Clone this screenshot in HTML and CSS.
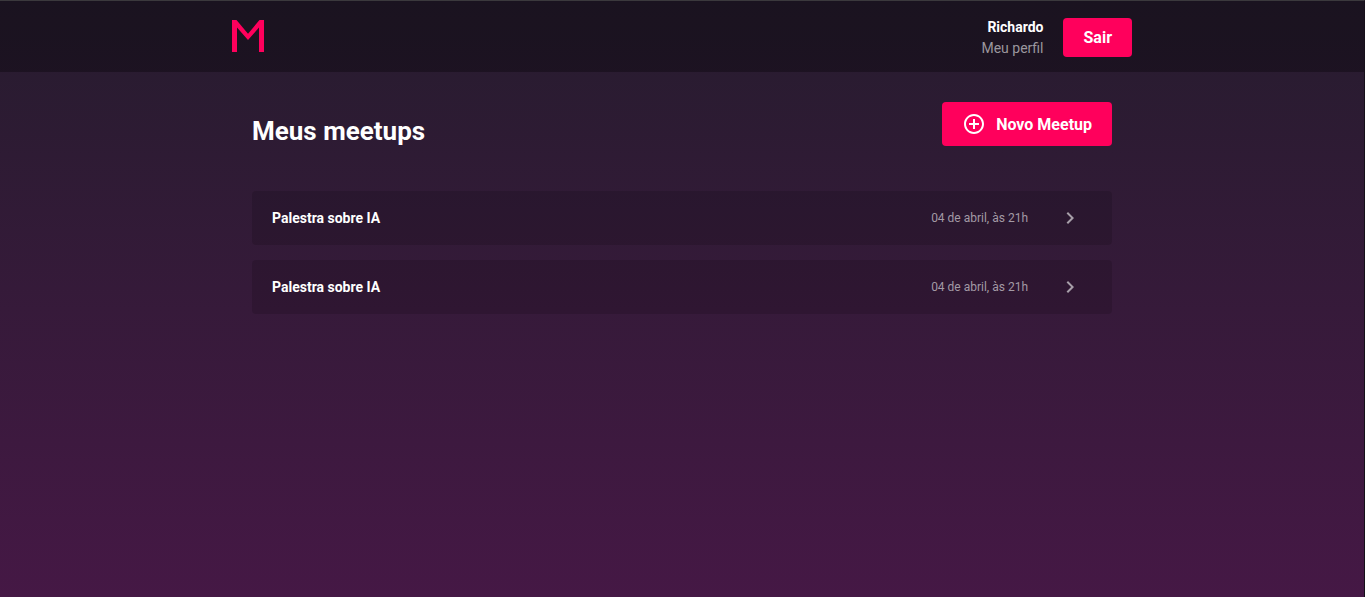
FILE: index.html
```html
<!DOCTYPE html>
<html lang="pt-BR">
<head>
  <meta charset="utf-8">
  <meta name="viewport" content="width=device-width, initial-scale=1">
  <title>Meetapp</title>
  <link rel="stylesheet" href="styles.css">
</head>
<body>
  <header class="header">
    <div class="header-content">
      <a class="logo" href="#" aria-label="Meetapp">
        <svg width="32" height="32" viewBox="0 0 32 32" aria-hidden="true"><path fill="#ff005c" d="M0 32V0h4.500L16 13.700 27.500 0H32v32h-5V7.500L16 20 5 7.500V32z"/></svg>
      </a>
      <div class="account">
        <div class="profile">
          <strong class="profile-name">Richardo</strong>
          <a class="profile-link" href="#">Meu perfil</a>
        </div>
        <button class="button" type="button">Sair</button>
      </div>
    </div>
  </header>
  <main class="main">
    <div class="toolbar">
      <h1 class="title">Meus meetups</h1>
      <button class="button button-new" type="button">
        <svg width="24" height="24" viewBox="0 0 24 24" aria-hidden="true"><path fill="currentColor" d="M13 7h-2v4H7v2h4v4h2v-4h4v-2h-4V7zm-1-5C6.480 2 2 6.480 2 12s4.480 10 10 10 10-4.480 10-10S17.520 2 12 2zm0 18c-4.410 0-8-3.590-8-8s3.590-8 8-8 8 3.590 8 8-3.590 8-8 8z"/></svg>
        Novo Meetup
      </button>
    </div>
    <ul class="meetups">
      <li>
        <a class="meetup" href="#">
          <strong class="meetup-name">Palestra sobre IA</strong>
          <span class="meetup-date">04 de abril, às 21h</span>
          <svg class="chevron" width="24" height="24" viewBox="0 0 24 24" aria-hidden="true"><path fill="currentColor" d="M10 6L8.590 7.410 13.170 12l-4.580 4.590L10 18l6-6z"/></svg>
        </a>
      </li>
      <li>
        <a class="meetup" href="#">
          <strong class="meetup-name">Palestra sobre IA</strong>
          <span class="meetup-date">04 de abril, às 21h</span>
          <svg class="chevron" width="24" height="24" viewBox="0 0 24 24" aria-hidden="true"><path fill="currentColor" d="M10 6L8.590 7.410 13.170 12l-4.580 4.590L10 18l6-6z"/></svg>
        </a>
      </li>
    </ul>
  </main>
</body>
</html>
```
FILE: styles.css
```css
* {
  box-sizing: border-box;
  margin: 0;
  padding: 0;
}

body {
  min-height: 100vh;
  border-top: 1px solid #3b393d;
  border-right: 1px solid #160f1a;
  background: linear-gradient(180deg, #261c2e, #451845) no-repeat;
  color: #fff;
  font: 14px/21px Roboto, sans-serif;
}

a {
  color: inherit;
  text-decoration: none;
}

.header {
  padding: 15px 20px 13px;
  background: rgba(0, 0, 0, 0.3);
}

.header-content {
  display: flex;
  align-items: flex-start;
  justify-content: space-between;
  max-width: 900px;
  margin: 0 auto;
}

.logo {
  padding-top: 4px;
}

.logo svg {
  display: block;
}

.account {
  display: flex;
  align-items: center;
  gap: 20px;
}

.profile {
  display: flex;
  flex-direction: column;
  padding-top: 1px;
  text-align: right;
}

.profile-link {
  color: #9b979e;
}

.button {
  padding: 10px 20px;
  border: 0;
  border-radius: 4px;
  background: #ff005c;
  color: #fff;
  font: bold 16px/19px Roboto, sans-serif;
  cursor: pointer;
}

.button-new {
  display: flex;
  align-items: center;
  gap: 10px;
}

.main {
  max-width: 900px;
  margin: 0 auto;
  padding: 30px 20px;
}

.toolbar {
  display: flex;
  align-items: flex-end;
  justify-content: space-between;
  margin-bottom: 45px;
}

.title {
  font-size: 26px;
  line-height: 30px;
}

.meetups {
  display: flex;
  flex-direction: column;
  gap: 15px;
  list-style: none;
}

.meetup {
  display: flex;
  align-items: center;
  padding: 15px 30px 15px 20px;
  border-radius: 4px;
  background: rgba(0, 0, 0, 0.13);
}

.meetup-name {
  flex: 1;
}

.meetup-date {
  font-size: 12px;
  color: #a39aa5;
}

.chevron {
  margin-left: 30px;
  color: #a79fa9;
}
```
